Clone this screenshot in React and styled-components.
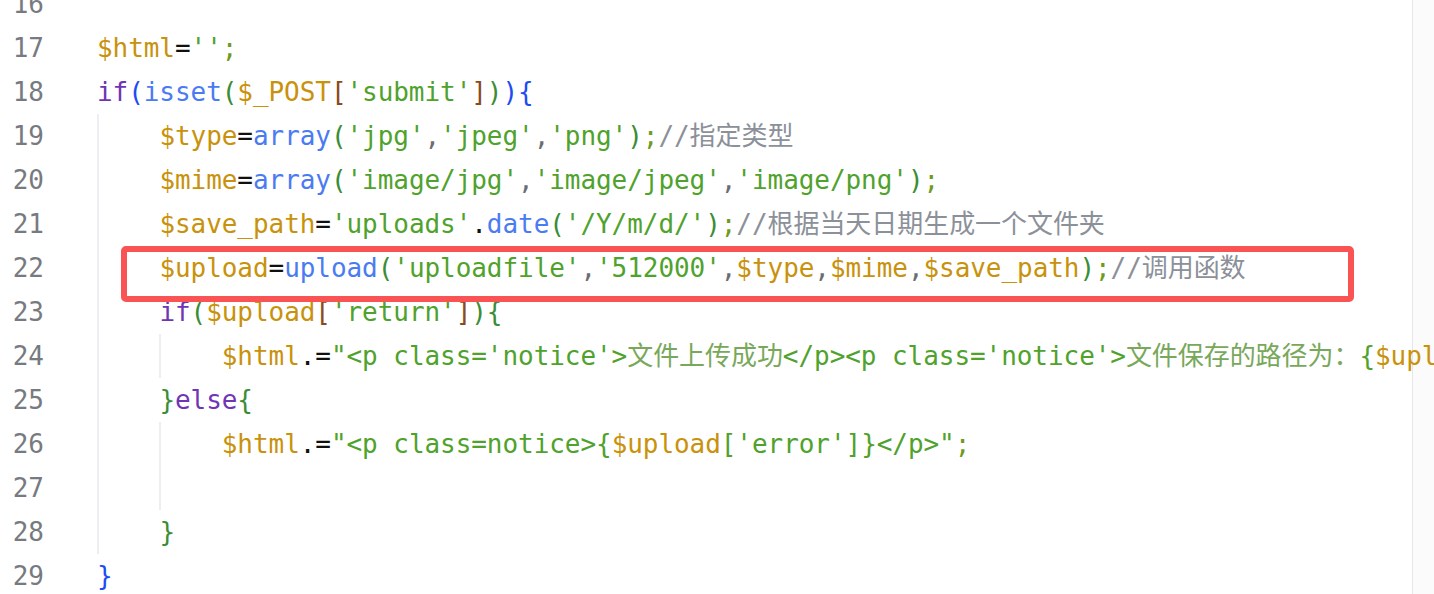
import React from "react";
import styled, { createGlobalStyle } from "styled-components";

const Global = createGlobalStyle`
  html, body { margin: 0; padding: 0; background: #ffffff; }
  body { overflow: hidden; }
`;

const COLORS = {
  v: "#c8920c",
  s: "#4fa22c",
  f: "#4a7bf2",
  k: "#7035b5",
  p: "#101010",
  b1: "#1d4cf3",
  b2: "#3a8d36",
  b3: "#8a4a1c",
  c: "#8b9099",
  sc: "#6f9a1e",
  cm: "#6a6d74",
  cn: "#78a85a",
};

const Editor = styled.div`
  position: relative;
  display: flex;
  width: 1434px;
  height: 594px;
  overflow: hidden;
  background: linear-gradient(
    to right,
    #ffffff 0,
    #ffffff 1412px,
    #e6e6e6 1412px,
    #e6e6e6 1413px,
    #fbfbfb 1413px
  );
  font-family: "DejaVu Sans Mono", "Noto Sans CJK SC", monospace;
  font-size: 26px;
`;

const Gutter = styled.div`
  flex: 0 0 44px;
  margin-top: -18px;
  text-align: right;
  color: #777a80;
`;

const Num = styled.div`
  height: 44px;
  line-height: 44px;
`;

const Code = styled.div`
  flex: 1;
  margin-top: -18px;
  margin-left: 53px;
  white-space: pre;
  letter-spacing: -0.06px;
`;

const Row = styled.div`
  height: 44px;
  line-height: 44px;
`;

const Block = styled.div`
  border-left: 2px solid #eceef1;
  padding-left: 60.4px;
`;

const Tok = styled.span`
  color: ${(p) => COLORS[p.$k] || "#101010"};
`;

const Highlight = styled.div`
  position: absolute;
  left: 121px;
  top: 246px;
  width: 1233px;
  height: 56px;
  box-sizing: border-box;
  border: 6px solid #f95353;
  border-radius: 5px;
  pointer-events: none;
`;

const L = {
  16: [],
  17: [["$html", "v"], ["=", "p"], ["''", "s"], [";", "sc"]],
  18: [
    ["if", "k"], ["(", "b1"], ["isset", "f"], ["(", "b2"], ["$_POST", "v"],
    ["[", "b3"], ["'submit'", "s"], ["]", "b3"], [")", "b2"], [")", "b1"], ["{", "b1"],
  ],
  19: [
    ["$type", "v"], ["=", "p"], ["array", "f"], ["(", "b2"], ["'jpg'", "s"], [",", "cm"],
    ["'jpeg'", "s"], [",", "cm"], ["'png'", "s"], [")", "b2"], [";", "sc"], ["//指定类型", "c"],
  ],
  20: [
    ["$mime", "v"], ["=", "p"], ["array", "f"], ["(", "b2"], ["'image/jpg'", "s"], [",", "cm"],
    ["'image/jpeg'", "s"], [",", "cm"], ["'image/png'", "s"], [")", "b2"], [";", "sc"],
  ],
  21: [
    ["$save_path", "v"], ["=", "p"], ["'uploads'", "s"], [".", "p"], ["date", "f"],
    ["(", "b2"], ["'/Y/m/d/'", "s"], [")", "b2"], [";", "sc"], ["//根据当天日期生成一个文件夹", "c"],
  ],
  22: [
    ["$upload", "v"], ["=", "p"], ["upload", "f"], ["(", "b2"], ["'uploadfile'", "s"], [",", "cm"],
    ["'512000'", "s"], [",", "cm"], ["$type", "v"], [",", "cm"], ["$mime", "v"], [",", "cm"],
    ["$save_path", "v"], [")", "b2"], [";", "sc"], ["//调用函数", "c"],
  ],
  23: [
    ["if", "k"], ["(", "b2"], ["$upload", "v"], ["[", "b3"], ["'return'", "s"], ["]", "b3"],
    [")", "b2"], ["{", "b2"],
  ],
  24: [
    ["$html", "v"], [".=", "p"], ["\"<p class='notice'>", "s"], ["文件上传成功", "cn"],
    ["</p><p class='notice'>", "s"], ["文件保存的路径为：", "cn"], ["{", "s"],
    ["$upload", "v"], ["['path']", "s"], ["}</p>\"", "s"], [";", "sc"],
  ],
  25: [["}", "b2"], ["else", "k"], ["{", "b2"]],
  26: [
    ["$html", "v"], [".=", "p"], ["\"<p class=notice>", "s"], ["{", "s"], ["$upload", "v"],
    ["['error']", "s"], ["}", "s"], ["</p>\"", "s"], [";", "sc"],
  ],
  27: [],
  28: [["}", "b2"]],
  29: [["}", "b1"]],
};

function Line({ n }) {
  return (
    <Row>
      {L[n].length === 0
        ? " "
        : L[n].map(([t, k], i) => (
            <Tok key={i} $k={k}>
              {t}
            </Tok>
          ))}
    </Row>
  );
}

export default function App() {
  const nums = [];
  for (let i = 16; i <= 29; i++) nums.push(i);
  return (
    <>
      <Global />
      <Editor>
        <Gutter>
          {nums.map((n) => (
            <Num key={n}>{n}</Num>
          ))}
        </Gutter>
        <Code>
          <Line n={16} />
          <Line n={17} />
          <Line n={18} />
          <Block>
            <Line n={19} />
            <Line n={20} />
            <Line n={21} />
            <Line n={22} />
            <Line n={23} />
            <Block>
              <Line n={24} />
            </Block>
            <Line n={25} />
            <Block>
              <Line n={26} />
              <Line n={27} />
            </Block>
            <Line n={28} />
          </Block>
          <Line n={29} />
        </Code>
        <Highlight />
      </Editor>
    </>
  );
}
